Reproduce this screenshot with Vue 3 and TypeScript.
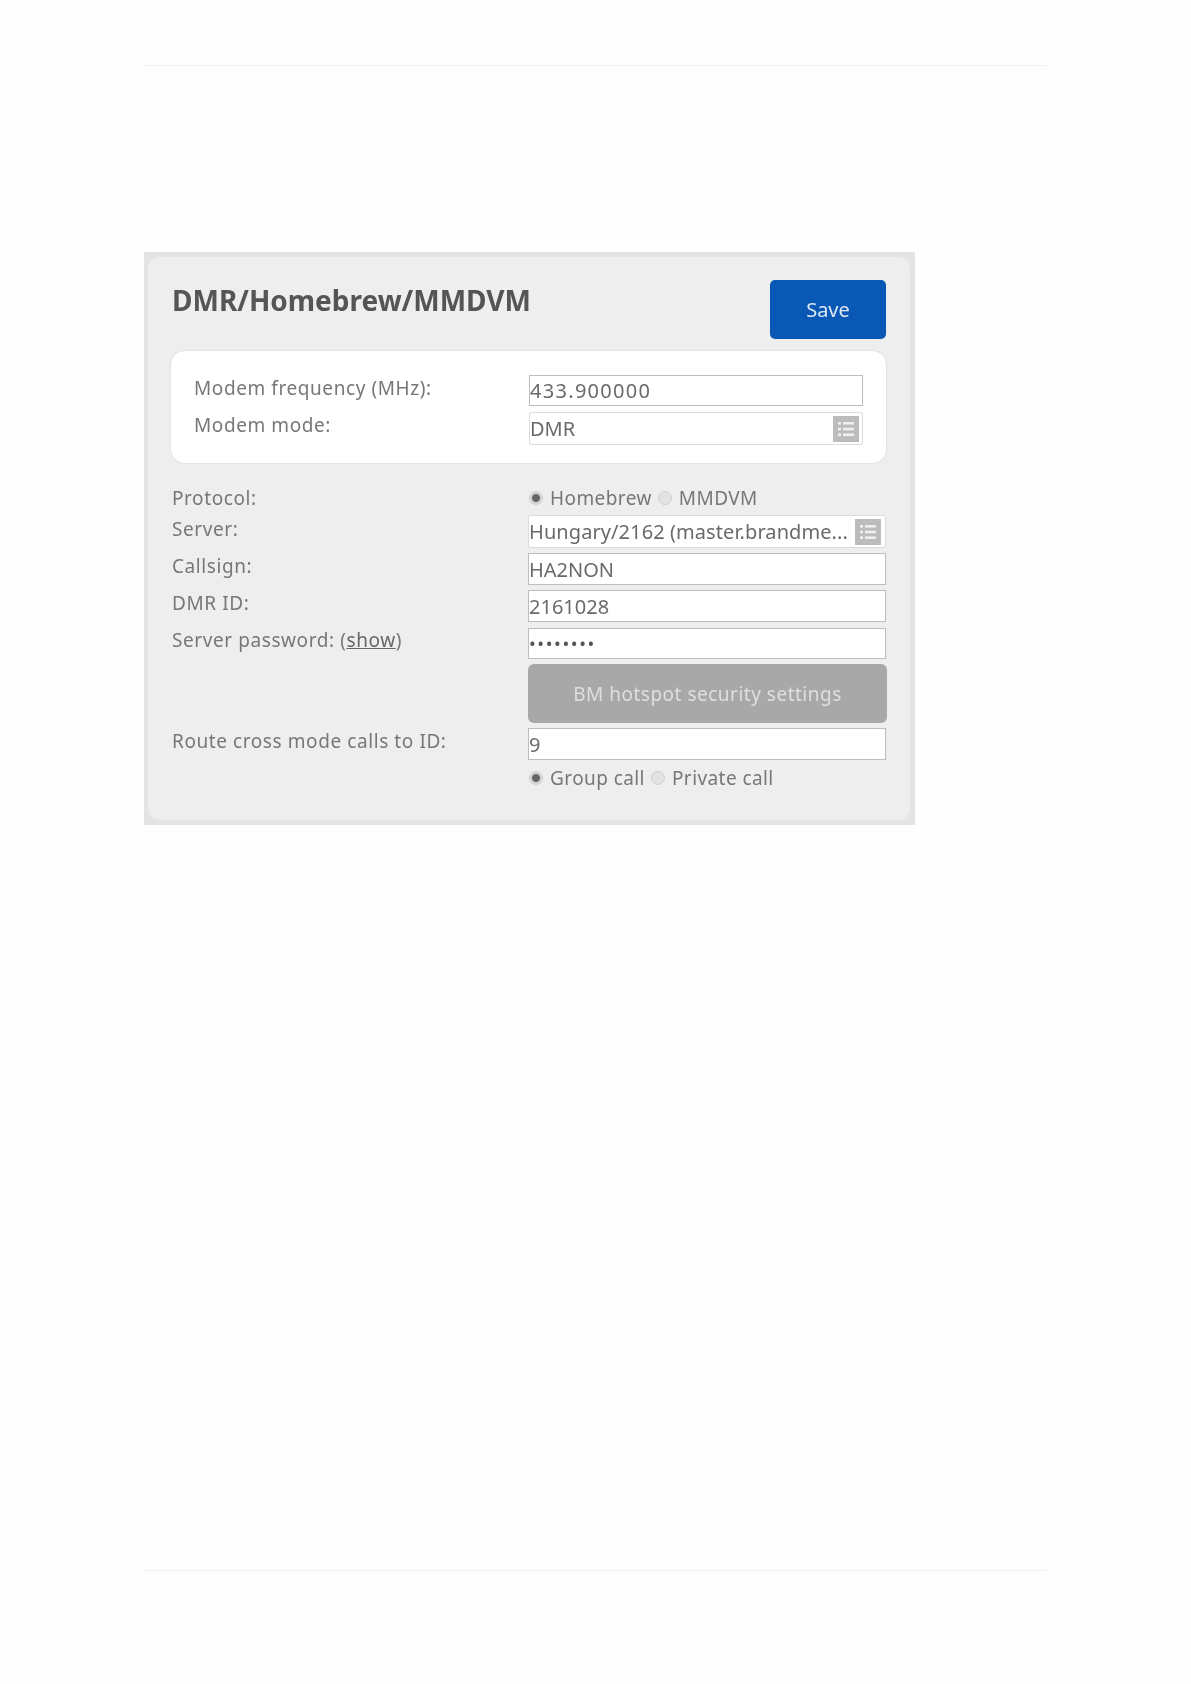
<script setup lang="ts">
const homeRows = [
  { label: 'Callsign:', value: 'HA2NON', type: 'text' },
  { label: 'DMR ID:', value: '2161028', type: 'text' },
];
</script>

<template>
  <div class="page">
    <div class="rule"></div>
    <section class="panel">
      <div class="card">
        <header class="head">
          <h1>DMR/Homebrew/MMDVM</h1>
          <button class="save">Save</button>
        </header>

        <div class="white">
          <div class="row">
            <label class="lbl low">Modem frequency (MHz):</label>
            <input class="field wide" readonly value="433.900000" />
          </div>
          <div class="row">
            <label class="lbl raised">Modem mode:</label>
            <div class="field select soft">
              <span class="val">DMR</span>
              <svg class="ico" viewBox="0 0 26 26"><rect width="26" height="26" fill="#bcbcbc"/><g fill="#efefef"><rect x="5" y="6" width="3" height="2.6"/><rect x="5" y="11.7" width="3" height="2.6"/><rect x="5" y="17.4" width="3" height="2.6"/><rect x="10" y="6" width="11" height="2.6"/><rect x="10" y="11.7" width="11" height="2.6"/><rect x="10" y="17.4" width="11" height="2.6"/></g></svg>
            </div>
          </div>
        </div>

        <div class="rows">
          <div class="row radios-row">
            <label class="lbl plain">Protocol:</label>
            <div class="radios">
              <span class="radio on"></span><span class="rt">Homebrew</span>
              <span class="radio"></span><span class="rt">MMDVM</span>
            </div>
          </div>
          <div class="row">
            <label class="lbl">Server:</label>
            <div class="field select soft server">
              <span class="val">Hungary/2162 (master.brandme...</span>
              <svg class="ico" viewBox="0 0 26 26"><rect width="26" height="26" fill="#bcbcbc"/><g fill="#efefef"><rect x="5" y="6" width="3" height="2.6"/><rect x="5" y="11.7" width="3" height="2.6"/><rect x="5" y="17.4" width="3" height="2.6"/><rect x="10" y="6" width="11" height="2.6"/><rect x="10" y="11.7" width="11" height="2.6"/><rect x="10" y="17.4" width="11" height="2.6"/></g></svg>
            </div>
          </div>
          <div v-for="r in homeRows" :key="r.label" class="row">
            <label class="lbl">{{ r.label }}</label>
            <input class="field" readonly :type="r.type" :value="r.value" />
          </div>
          <div class="row">
            <label class="lbl">Server password: (<a class="show">show</a>)</label>
            <div class="field pw">••••••••</div>
          </div>
          <div class="row">
            <span class="lbl"></span>
            <button class="grey">BM hotspot security settings</button>
          </div>
          <div class="row">
            <label class="lbl">Route cross mode calls to ID:</label>
            <input class="field" readonly value="9" />
          </div>
          <div class="row radios-row last">
            <span class="lbl"></span>
            <div class="radios">
              <span class="radio on"></span><span class="rt">Group call</span>
              <span class="radio"></span><span class="rt">Private call</span>
            </div>
          </div>
        </div>
      </div>
    </section>
    <div class="rule bottom"></div>
  </div>
</template>

<style>
html, body { margin: 0; background: #fefefe; }
</style>

<style scoped>
.page {
  box-sizing: border-box;
  height: 1684px;
  padding: 65px 144px 113px;
  display: flex;
  flex-direction: column;
  font-family: "Noto Sans", sans-serif;
  color: #777;
}
.rule { height: 1px; background: #f1f1f1; flex: none; }
.bottom { margin-top: auto; }
.panel {
  margin-top: 186px;
  width: 771px;
  box-sizing: border-box;
  padding: 5px 5px 5px 4px;
  background: #e4e4e4;
}
.card {
  background: #eeeeee;
  border-radius: 12px;
  padding: 23px 24px 23px 23px;
  height: 563px;
  box-sizing: border-box;
  filter: blur(0.45px);
}
.head { display: flex; justify-content: space-between; align-items: flex-start; height: 71px; }
h1 {
  margin: 2px 0 0 1px;
  font-size: 28px;
  line-height: 36px;
  font-weight: 700;
  color: #555;
}
.save {
  width: 116px;
  height: 59px;
  border: 0;
  border-radius: 5px;
  background: #0a58b5;
  color: #dce8f5;
  font: 20px "Noto Sans", sans-serif;
}
.white {
  background: #fff;
  border-radius: 14px;
  box-shadow: 0 0 2px #cfcfcf;
  height: 112px;
  box-sizing: border-box;
  padding: 24px 23px 0 23px;
  display: flex;
  flex-direction: column;
  gap: 6px;
}
.rows {
  margin-top: 23px;
  padding-left: 1px;
  display: flex;
  flex-direction: column;
  gap: 5px;
}
.row { display: flex; align-items: center; justify-content: space-between; }
.lbl { font-size: 19px; line-height: 26px; letter-spacing: 0.58px; padding-bottom: 6px; white-space: nowrap; }
.lbl.plain { padding-bottom: 0; }
.lbl.low { padding-bottom: 5px; }
.lbl.raised { padding-bottom: 7px; }
.show { text-decoration: underline; color: #666; }
.field {
  box-sizing: border-box;
  width: 358px;
  height: 32px;
  border: 1.5px solid #bdbdbd;
  background: #fff;
  padding: 0;
  color: #6a6a6a;
  font: 20px/28px "Noto Sans", sans-serif;
  outline: none;
}
.wide { letter-spacing: 1.3px; }
.white .field { width: 334px; height: 31px; }
.white .select { height: 33px; }
.select {
  height: 33px;
  display: flex;
  align-items: center;
  justify-content: space-between;
  padding-right: 3px;
}
.server { padding-right: 4px; letter-spacing: 0.08px; }
.soft { border-color: #dcdcdc; border-radius: 2px; }
.val { white-space: nowrap; flex: 1; min-width: 0; }
.ico { width: 26px; height: 26px; flex: none; }
.pw {
  height: 31px;
  font-size: 18px;
  letter-spacing: 1.6px;
  color: #555;
  display: flex;
  align-items: center;
}
.grey {
  width: 359px;
  height: 59px;
  margin-right: -1px;
  border: 0;
  border-radius: 6px;
  background: #a8a8a8;
  color: #dfdfdf;
  font: 19px "Noto Sans", sans-serif;
  letter-spacing: 0.5px;
}
.radios-row { height: 24px; }
.radios-row.last { margin-top: 1px; }
.radios { width: 357px; display: flex; align-items: center; font-size: 19px; letter-spacing: 0.42px; }
.radio {
  box-sizing: border-box;
  width: 14px;
  height: 14px;
  border-radius: 50%;
  border: 1px solid #cfcfcf;
  background: #e2e2e2;
  margin-right: 7px;
  flex: none;
}
.radio.on { background: radial-gradient(circle, #666 0 3.5px, #d5d5d5 4.5px); }
.rt { margin-right: 6px; }
</style>
